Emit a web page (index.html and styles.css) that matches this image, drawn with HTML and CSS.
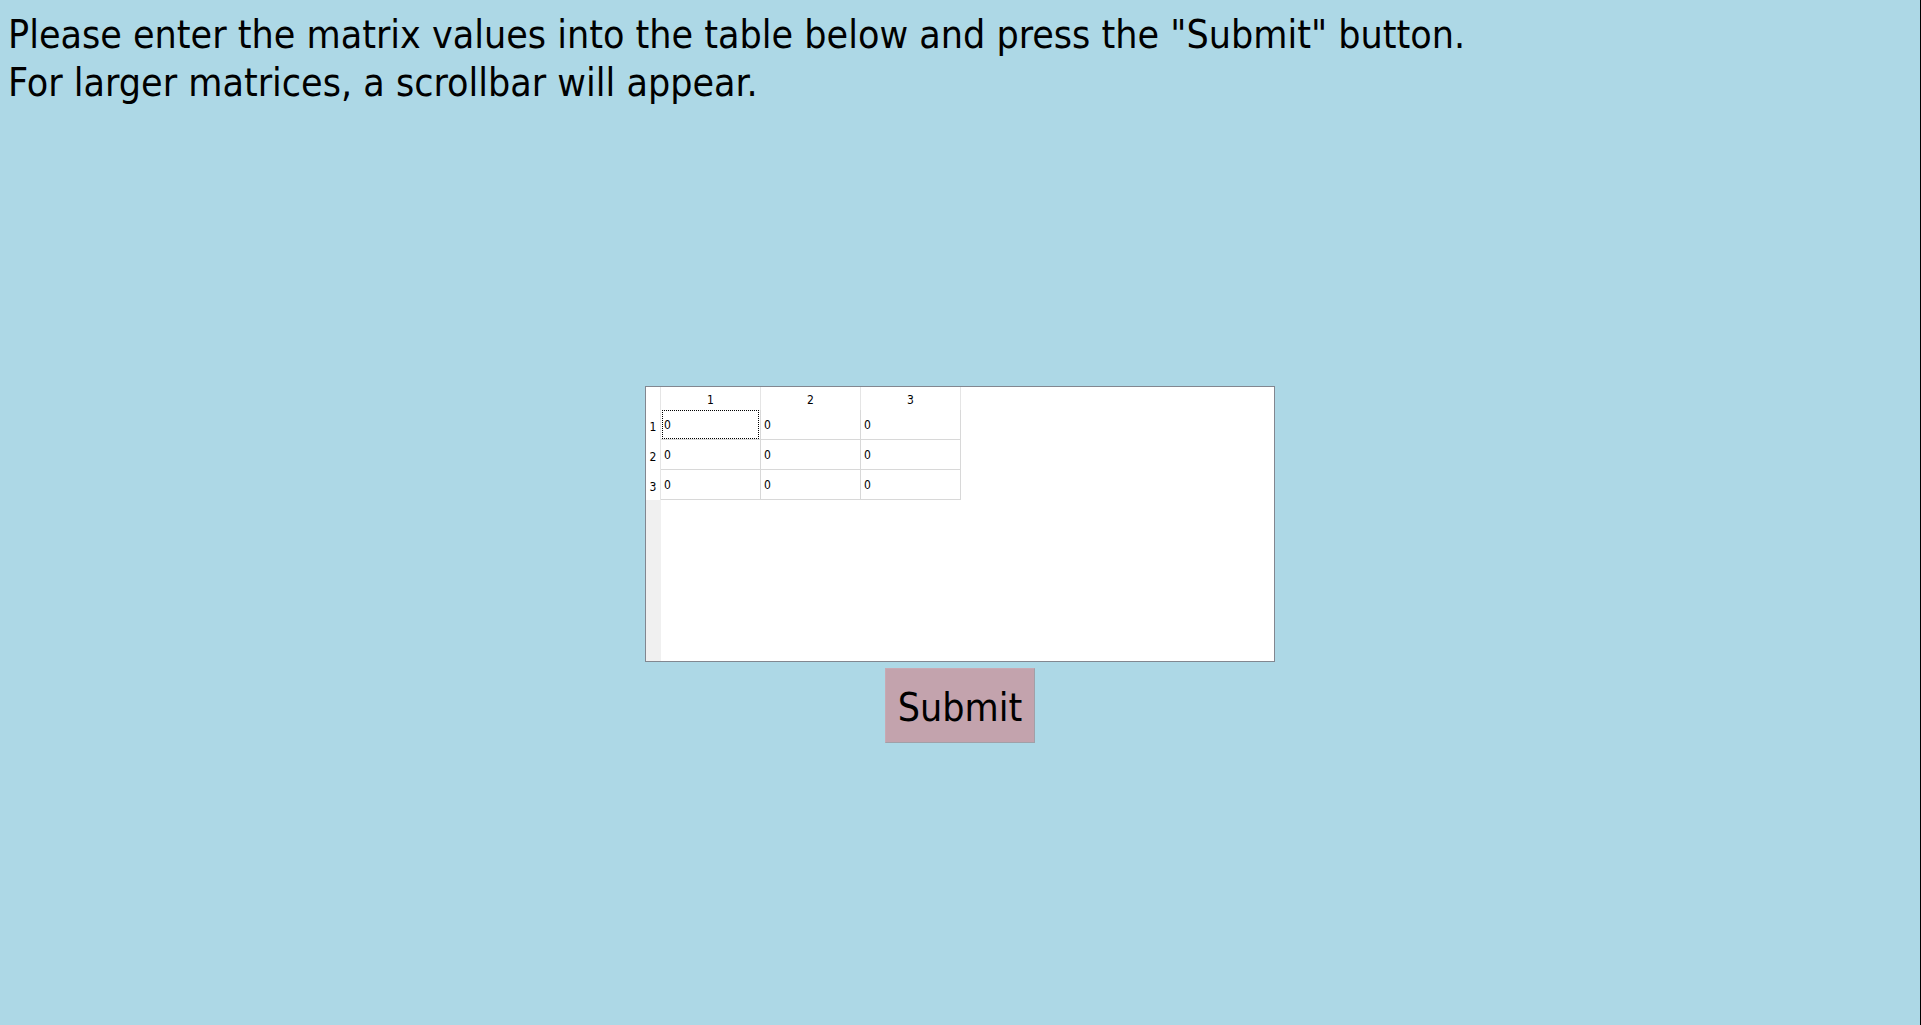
FILE: index.html
```html
<!DOCTYPE html>
<html lang="en">
<head>
<meta charset="utf-8">
<title>Matrix input</title>
<link rel="stylesheet" href="styles.css">
</head>
<body>
<p class="instructions">Please enter the matrix values into the table below and press the "Submit" button.<br>For larger matrices, a scrollbar will appear.</p>
<form class="matrix-form">
  <div class="table-view">
    <table class="matrix">
      <thead>
        <tr><td class="corner"></td><th scope="col">1</th><th scope="col">2</th><th scope="col">3</th></tr>
      </thead>
      <tbody>
        <tr>
          <th scope="row">1</th>
          <td><input class="cell current" type="text" value="0" aria-label="Row 1, column 1"></td>
          <td><input class="cell" type="text" value="0" aria-label="Row 1, column 2"></td>
          <td><input class="cell" type="text" value="0" aria-label="Row 1, column 3"></td>
        </tr>
        <tr>
          <th scope="row">2</th>
          <td><input class="cell" type="text" value="0" aria-label="Row 2, column 1"></td>
          <td><input class="cell" type="text" value="0" aria-label="Row 2, column 2"></td>
          <td><input class="cell" type="text" value="0" aria-label="Row 2, column 3"></td>
        </tr>
        <tr>
          <th scope="row">3</th>
          <td><input class="cell" type="text" value="0" aria-label="Row 3, column 1"></td>
          <td><input class="cell" type="text" value="0" aria-label="Row 3, column 2"></td>
          <td><input class="cell" type="text" value="0" aria-label="Row 3, column 3"></td>
        </tr>
      </tbody>
    </table>
    <div class="header-gutter"></div>
  </div>
  <button class="submit" type="submit">Submit</button>
</form>
</body>
</html>
```
FILE: styles.css
```css
* {
  box-sizing: border-box;
}

body {
  display: flex;
  flex-direction: column;
  min-height: 100vh;
  margin: 0;
  border-right: 1px solid #000;
  background: #add8e6;
  color: #000;
  font-family: Tahoma, "DejaVu Sans Condensed", "DejaVu Sans", sans-serif;
  font-size: 39px;
  line-height: 48px;
}

.instructions {
  margin: 0;
  padding: 11px 8px 0;
}

.matrix-form {
  display: flex;
  flex: 1;
  flex-direction: column;
  align-items: center;
  justify-content: center;
  gap: 6px;
  padding-bottom: 3px;
}

.table-view {
  display: flex;
  flex-direction: column;
  width: 630px;
  max-width: 100%;
  height: 276px;
  overflow: auto;
  border: 1px solid #828790;
  background: #fff;
}

.header-gutter {
  flex: 1;
  width: 15px;
  background: #f0f0f0;
}

.matrix {
  width: 315px;
  table-layout: fixed;
  border-collapse: separate;
  border-spacing: 0;
  font-size: 12px;
  line-height: 14px;
}

.matrix th,
.matrix td {
  height: 30px;
  padding: 0;
  border-right: 1px solid #d8d8d8;
  border-bottom: 1px solid #d8d8d8;
  font-weight: normal;
  text-align: center;
}

.matrix thead th,
.matrix thead td {
  height: 23px;
  padding-top: 2px;
  border-right-color: #e5e5e5;
  border-bottom: 0;
}

.matrix .corner {
  width: 15px;
}

.matrix tbody th {
  padding-top: 3px;
  border-right-color: #e5e5e5;
  border-bottom: 0;
}

.cell {
  display: block;
  width: 97px;
  height: 29px;
  margin-left: 1px;
  padding: 0 1px;
  border: 1px solid transparent;
  border-radius: 0;
  outline: none;
  background: transparent;
  color: inherit;
  font: inherit;
}

.cell.current,
.cell:focus {
  border: 1px dotted #000;
}

.submit {
  min-width: 150px;
  height: 75px;
  padding: 4px 8px 0;
  border: 1px solid;
  border-color: #c8a9b3 #a0a0a8 #a0a0a8 #c8a9b3;
  background: #c3a3ad;
  color: inherit;
  font: inherit;
}
```
